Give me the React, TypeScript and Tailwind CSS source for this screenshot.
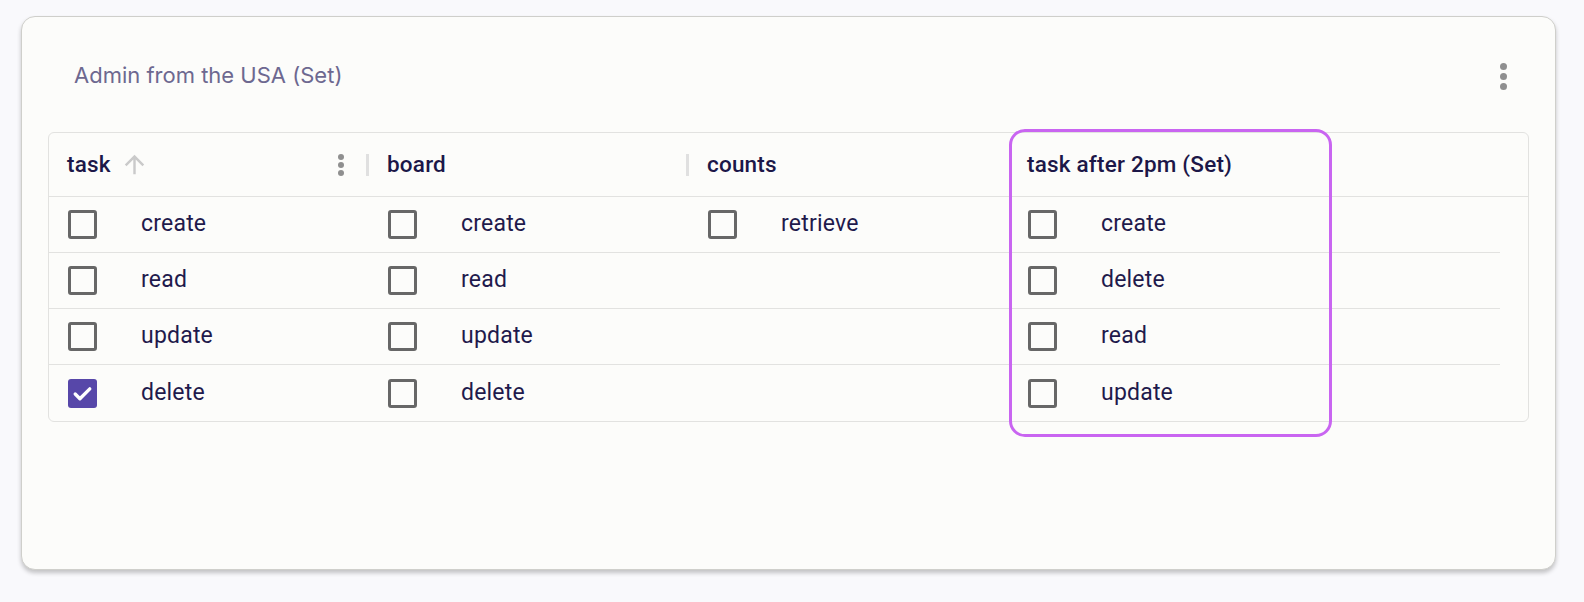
import React from 'react';

type Column = {
    title: string;
    items: string[];
    checked?: string[];
    sortable?: boolean;
    menu?: boolean;
    divider?: boolean;
};

const columns: Column[] = [
    { title: 'task', items: ['create', 'read', 'update', 'delete'], checked: ['delete'], sortable: true, menu: true, divider: true },
    { title: 'board', items: ['create', 'read', 'update', 'delete'], divider: true },
    { title: 'counts', items: ['retrieve'] },
    { title: 'task after 2pm (Set)', items: ['create', 'delete', 'read', 'update'] },
];

const ROWS = 4;

const Checkbox: React.FC<{ checked?: boolean }> = ({ checked }) =>
    checked ? (
        <span className="flex h-[29px] w-[29px] items-center justify-center rounded-[3px] bg-[#5747a9]">
            <svg viewBox="0 0 24 24" className="h-[25px] w-[25px]" fill="none" stroke="white" strokeWidth="3.2" strokeLinecap="round" strokeLinejoin="round">
                <path d="M5 12.5l4.5 4.5L19 7.5" />
            </svg>
        </span>
    ) : (
        <span className="block h-[29px] w-[29px] rounded-[3px] border-[3px] border-[#676767]" />
    );

const Kebab: React.FC<{ dot: string; gap: string }> = ({ dot, gap }) => (
    <span className={`flex flex-col items-center ${gap}`}>
        <span className={`${dot} rounded-full bg-[#8f8f8f]`} />
        <span className={`${dot} rounded-full bg-[#8f8f8f]`} />
        <span className={`${dot} rounded-full bg-[#8f8f8f]`} />
    </span>
);

const HeaderCell: React.FC<{ col: Column }> = ({ col }) => (
    <div className="flex h-full w-[320px] shrink-0 items-center pl-[18px]">
        <span className="text-[22.5px] font-medium tracking-[0.2px] text-[#1c1748]">{col.title}</span>
        {col.sortable && (
            <svg viewBox="0 0 24 24" className="ml-[9px] h-[29px] w-[29px]" fill="#cacaca">
                <path d="M4 12l1.41 1.41L11 7.83V20h2V7.83l5.58 5.59L20 12l-8-8-8 8z" />
            </svg>
        )}
        <span className="ml-auto flex items-center">
            {col.menu && (
                <span className="mr-[22px]">
                    <Kebab dot="h-[6px] w-[6px]" gap="gap-[2px]" />
                </span>
            )}
            {col.divider && <span className="block h-[22px] w-[3px] bg-[#e0e0e0]" />}
        </span>
    </div>
);

const BodyCell: React.FC<{ label?: string; checked?: boolean }> = ({ label, checked }) => (
    <div className="flex h-full w-[320px] shrink-0 items-center pl-[19px]">
        {label && (
            <>
                <Checkbox checked={checked} />
                <span className="ml-[44px] text-[23px] tracking-[0.2px] text-[#1f1a4c]">{label}</span>
            </>
        )}
    </div>
);

const App: React.FC = () => {
    return (
        <div className="h-[602px] w-[1584px] bg-[#f9f9fc] pl-[21px] pt-[16px]" style={{ fontFamily: 'Roboto, "Liberation Sans", sans-serif' }}>
            <div className="h-[554px] w-[1535px] rounded-[14px] border border-[#cfcfcb] bg-[#fcfcfa] px-[26px] shadow-[0_3px_4px_rgba(0,0,0,0.22)]">
                <div className="flex h-[115px] items-start justify-between pt-[43px]">
                    <h2 className="pl-[26px] text-[22px] leading-[30px] text-[#6d6890]" style={{ fontFamily: 'Inter, "Noto Sans", sans-serif' }}>
                        Admin from the USA (Set)
                    </h2>
                    <span className="mr-[22px] mt-[3px]">
                        <Kebab dot="h-[7px] w-[7px]" gap="gap-[3px]" />
                    </span>
                </div>

                <div className="relative h-[290px] w-[1481px] rounded-[6px] border border-[#e2e2e0]">
                    <div className="flex h-[64px] border-b border-[#e2e2e0]">
                        {columns.map(col => (
                            <HeaderCell key={col.title} col={col} />
                        ))}
                    </div>
                    {Array.from({ length: ROWS }).map((_, i) => (
                        <div key={i} className={`flex h-[56px] w-[1451px] ${i < ROWS - 1 ? 'border-b border-[#e2e2e0]' : ''}`}>
                            {columns.map(col => (
                                <BodyCell
                                    key={col.title}
                                    label={col.items[i]}
                                    checked={col.checked?.includes(col.items[i] ?? '')}
                                />
                            ))}
                        </div>
                    ))}

                    {/* highlighted column */}
                    <div className="pointer-events-none absolute left-[960px] top-[-4px] h-[308px] w-[323px] rounded-[16px] border-[3px] border-[#c965f1]" />
                </div>
            </div>
        </div>
    );
};

export default App;
